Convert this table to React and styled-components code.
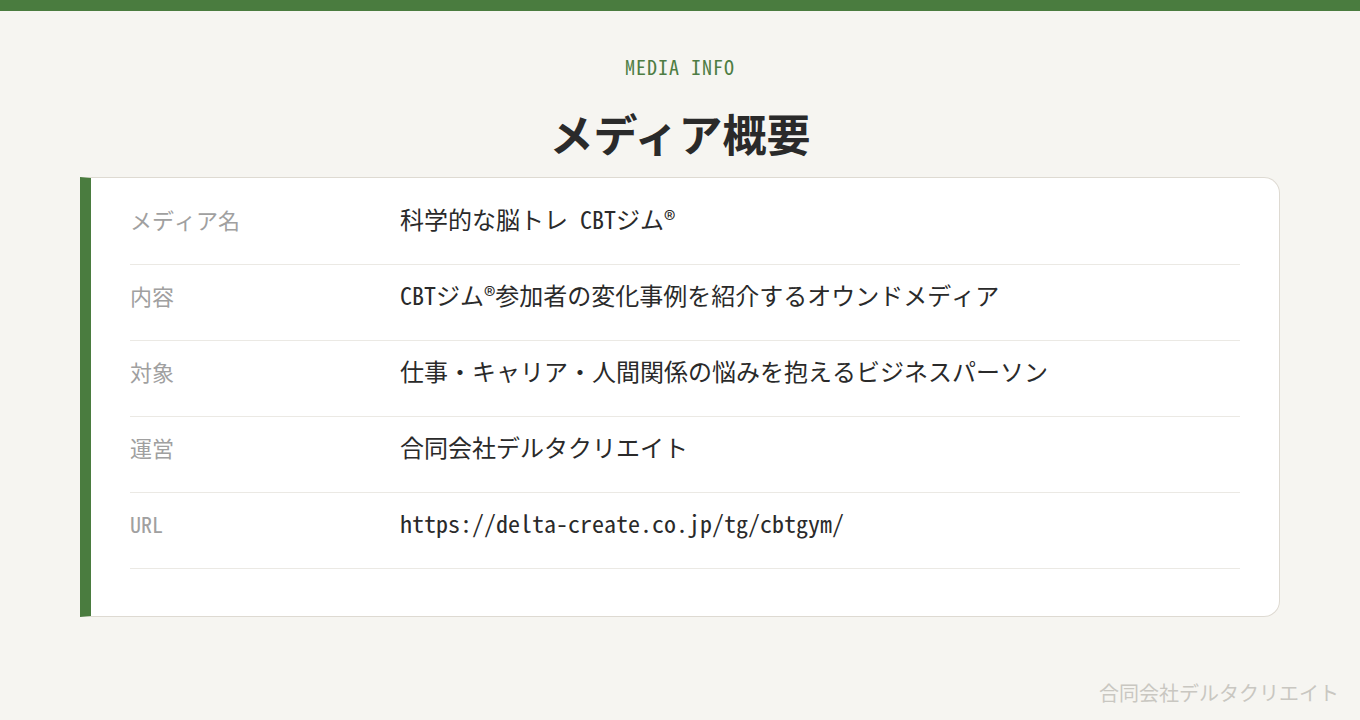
import React from "react";
import styled, { createGlobalStyle } from "styled-components";

const Global = createGlobalStyle`
  html, body { margin: 0; padding: 0; background: #f6f5f1; }
  body { font-family: "Noto Sans Mono CJK JP", "Noto Sans CJK JP", monospace; }
`;

const Page = styled.div`
  min-height: 720px;
  display: flex;
  flex-direction: column;
  border-top: 11px solid #4a7c3f;
  box-sizing: border-box;
`;

const Header = styled.header`
  display: flex;
  flex-direction: column;
  align-items: center;
  padding-top: 42px;
`;

const Eyebrow = styled.div`
  font-family: "Noto Sans Mono CJK JP", "DejaVu Sans Mono", monospace;
  font-size: 20px;
  line-height: 28px;
  letter-spacing: 1px;
  color: #4e7d44;
`;

const Title = styled.h1`
  margin: 26px 0 0;
  font-family: "Noto Sans CJK JP", sans-serif;
  font-weight: 700;
  font-size: 44px;
  line-height: 52px;
  color: #2a2a2a;
`;

const Card = styled.section`
  margin: 18px 80px 0;
  background: #ffffff;
  border: 1px solid #dedad2;
  border-left: 11px solid #4a7c3f;
  border-radius: 0 16px 16px 0;
  padding: 11px 39px 47px 39px;
`;

const Row = styled.div`
  display: grid;
  grid-template-columns: 270px 1fr;
  padding: 18px 0 33px;
  border-bottom: 1px solid #ebe9e4;
  line-height: 24px;
`;

const Label = styled.div`
  font-size: 22px;
  color: #a0a0a0;
`;

const Value = styled.div`
  font-size: 24px;
  color: #2a2a2a;
`;

const Footer = styled.footer`
  margin-top: auto;
  align-self: flex-end;
  padding: 0 21px 13px 0;
  font-family: "Noto Sans CJK JP", sans-serif;
  font-size: 20px;
  line-height: 28px;
  color: #c9c7c1;
`;

const rows = [
  ["メディア名", "科学的な脳トレ CBTジム®"],
  ["内容", "CBTジム®参加者の変化事例を紹介するオウンドメディア"],
  ["対象", "仕事・キャリア・人間関係の悩みを抱えるビジネスパーソン"],
  ["運営", "合同会社デルタクリエイト"],
  ["URL", "https://delta-create.co.jp/tg/cbtgym/"],
];

export default function App() {
  return (
    <>
      <Global />
      <Page>
        <Header>
          <Eyebrow>MEDIA INFO</Eyebrow>
          <Title>メディア概要</Title>
        </Header>
        <Card>
          {rows.map(([k, v]) => (
            <Row key={k}>
              <Label>{k}</Label>
              <Value>{v}</Value>
            </Row>
          ))}
        </Card>
        <Footer>合同会社デルタクリエイト</Footer>
      </Page>
    </>
  );
}
